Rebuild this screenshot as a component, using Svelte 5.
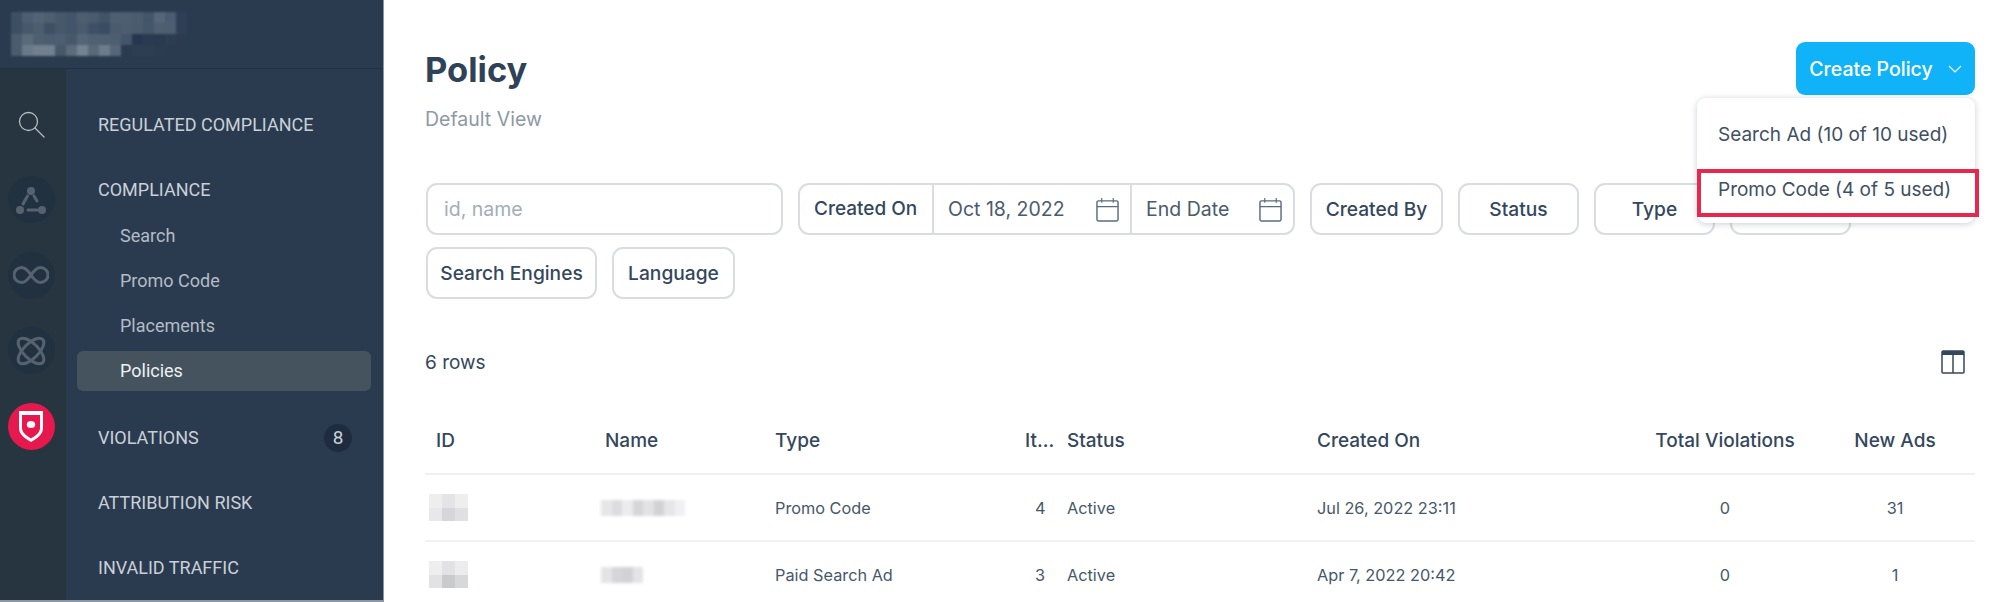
<script lang="ts">
  const railIcons = ['search', 'network', 'infinity', 'atom', 'shield'];

  const logoCells = [
    ['#3d4f62','#4c5e70','#526374','#4e5f70','#46586a','#43556a','#4d5e70','#4a5b6d','#415367','#4e5f72','#4d5e70','#4b5c6e','#435568','#55667a','#4b5c6e','#2f3f55'],
    ['#3d4f62','#46586b','#4c5d70','#3f5065','#46586a','#43556a','#4a5b6d','#3f5066','#394c62','#4a5b6d','#4c5d70','#4a5b6d','#445669','#4e5f70','#4d5e70','#2f3f55'],
    ['#4b5c6e','#5a6b7b','#4e5f71','#4c5d6f','#4d5e70','#46586a','#54657a','#4f6072','#4f6072','#4d5e70','#43556a','#253650','#2a3b50','#283950','#2c3d52','#2a3b50'],
    ['#4b5c6e','#6a7a89','#727f8d','#70808e','#46586a','#5c6c7c','#74838f','#59697a','#6d7c8a','#55667a','#2a3b50','#2d3e53','#2d3e53','#2b3c51','#2a3b50','#2a3b50'],
  ];

  const filters = [
    { label: 'Created By', cls: 'created-by' },
    { label: 'Status', cls: 'status' },
    { label: 'Type', cls: 'type' },
    // the label of this one sits behind the open dropdown
    { label: '', cls: 'hidden-chip' },
  ];
  const rows = [
    { type: 'Promo Code', items: 4, status: 'Active', created: 'Jul 26, 2022 23:11', total: 0, newAds: 31,
      idCells: ['#eeeeee','#e4e4e6','#eeeeee','#e8e8ea','#d6d6da','#e0e0e2'],
      nameCells: ['#e6e6e8','#dcdcde','#ececee','#d6d6d8','#e2e2e4','#d2d2d4','#e6e6e8','#f0f0f2'] },
    { type: 'Paid Search Ad', items: 3, status: 'Active', created: 'Apr 7, 2022 20:42', total: 0, newAds: 1,
      idCells: ['#eeeeee','#e2e2e4','#ececee','#e2e2e4','#c8cacc','#d6d8da'],
      nameCells: ['#e4e4e6','#d6d6d8','#d2d2d4','#e4e4e6'] },
  ];
</script>

<div class="page">
  <aside class="sidebar">
    <div class="brand">
      <div class="mosaic">
        {#each logoCells as line}
          {#each line as c}<span style="background:{c}"></span>{/each}
        {/each}
      </div>
    </div>
    <div class="side-body">
      <nav class="rail">
        {#each railIcons as name}
          <div class="rail-btn" class:plain={name === 'search'} class:on={name === 'shield'}>
            {#if name === 'search'}
              <svg width="30" height="30" viewBox="0 0 30 30" fill="none" stroke="#b4bcc4" stroke-width="1.3"><circle cx="12.5" cy="12.5" r="9"/><path d="M19 19l9 9" stroke-linecap="round"/></svg>
            {:else if name === 'network'}
              <svg width="32" height="32" viewBox="0 0 32 32" fill="none" stroke="#56636f" stroke-width="3" stroke-linecap="round"><circle cx="16" cy="7" r="4" fill="#56636f" stroke="none"/><circle cx="5" cy="26" r="4" fill="#56636f" stroke="none"/><circle cx="27" cy="26" r="4" fill="#56636f" stroke="none"/><path d="M12.500 12l-4.500 8M19 12l3 5M13 26h9"/></svg>
            {:else if name === 'infinity'}
              <svg width="36" height="20" viewBox="0 0 36 20" fill="none" stroke="#56636f" stroke-width="3"><path d="M18 10c-3-4.500-6-7.500-9.500-7.500a7.500 7.500 0 0 0 0 15c3.500 0 6.500-3 9.500-7.500s6-7.500 9.500-7.500a7.500 7.500 0 0 1 0 15c-3.500 0-6.500-3-9.500-7.500z"/></svg>
            {:else if name === 'atom'}
              <svg width="30" height="30" viewBox="0 0 30 30" fill="none" stroke="#56636f" stroke-width="3"><ellipse cx="15" cy="15" rx="7.500" ry="16.500" transform="rotate(45 15 15)"/><ellipse cx="15" cy="15" rx="7.500" ry="16.500" transform="rotate(-45 15 15)"/></svg>
            {:else}
              <svg width="24" height="31" viewBox="0 0 24 31"><path d="M0 0h24v17c0 6-5 10-12 14C5 27 0 23 0 17z" fill="#fff"/><path d="M3 4h18v13c0 4.500-4 7.500-9 10.500C7 24.500 3 21.500 3 17z" fill="#e6184d"/><ellipse cx="12" cy="13.500" rx="4.200" ry="3.600" fill="#fff"/></svg>
            {/if}
          </div>
        {/each}
      </nav>
      <nav class="menu">
        <div class="sec first">REGULATED COMPLIANCE</div>
        <div class="sec">COMPLIANCE</div>
        <div class="sub">Search</div>
        <div class="sub">Promo Code</div>
        <div class="sub">Placements</div>
        <div class="sub active">Policies</div>
        <div class="sec viol">VIOLATIONS <span class="badge">8</span></div>
        <div class="sec">ATTRIBUTION RISK</div>
        <div class="sec">INVALID TRAFFIC</div>
      </nav>
    </div>
  </aside>

  <main class="main">
    <header class="head">
      <div>
        <h1>Policy</h1>
        <p class="view">Default View</p>
      </div>
      <div class="create-wrap">
        <button class="create">Create Policy
          <svg width="14" height="8" viewBox="0 0 14 8" fill="none" stroke="#fff" stroke-width="1.200"><path d="M1 1l6 6 6-6"/></svg>
        </button>
        <div class="dropdown">
          <div class="opt">Search Ad (10 of 10 used)</div>
          <div class="opt hit">Promo Code (4 of 5 used)</div>
        </div>
      </div>
    </header>

    <div class="filters">
      <div class="search">id, name</div>
      <div class="dates">
        <div class="d-label">Created On</div>
        <div class="d-cell start">Oct 18, 2022
          <svg class="cal" width="23" height="25" viewBox="0 0 24 26" fill="none" stroke="#5a6b7d" stroke-width="1.500"><rect x="1" y="4" width="22" height="21" rx="1.500"/><path d="M1 10h22M6 1v5M18 1v5" stroke-width="1.200"/></svg>
        </div>
        <div class="d-cell end">End Date
          <svg class="cal" width="23" height="25" viewBox="0 0 24 26" fill="none" stroke="#5a6b7d" stroke-width="1.500"><rect x="1" y="4" width="22" height="21" rx="1.500"/><path d="M1 10h22M6 1v5M18 1v5" stroke-width="1.200"/></svg>
        </div>
      </div>
      {#each filters as f}
        <button class="chip {f.cls}">{f.label}</button>
      {/each}
      <button class="chip engines">Search Engines</button>
      <button class="chip language">Language</button>
    </div>

    <div class="count">
      <span>6 rows</span>
      <svg width="24" height="24" viewBox="0 0 24 24" fill="none" stroke="#34475c" stroke-width="1.500"><rect x="1" y="1" width="22" height="22" rx="1"/><path d="M1 3h22" stroke-width="4"/><path d="M12 2v21"/></svg>
    </div>

    <div class="table">
      <div class="tr th">
        <div class="c id">ID</div>
        <div class="c name">Name</div>
        <div class="c col-type">Type</div>
        <div class="c items">It...</div>
        <div class="c col-status">Status</div>
        <div class="c created">Created On</div>
        <div class="c total">Total Violations</div>
        <div class="c new">New Ads</div>
      </div>
      {#each rows as r}
        <div class="tr">
          <div class="c id">
            <div class="id-mosaic">
              {#each r.idCells as c}<span style="background:{c}"></span>{/each}
            </div>
          </div>
          <div class="c name">
            <div class="name-blur" style="width:{r.nameCells.length * 10.5}px">
              {#each r.nameCells as c}<span style="background:{c}"></span>{/each}
            </div>
          </div>
          <div class="c col-type">{r.type}</div>
          <div class="c items num">{r.items}</div>
          <div class="c col-status">{r.status}</div>
          <div class="c created">{r.created}</div>
          <div class="c total">{r.total}</div>
          <div class="c new">{r.newAds}</div>
        </div>
      {/each}
    </div>
  </main>
</div>

<style>
  :global(body) {
    margin: 0;
    background: #fff;
  }

  .page {
    display: flex;
    width: 1999px;
    height: 602px;
    overflow: hidden;
    font-family: "Inter", "Liberation Sans", sans-serif;
    color: #34475c;
  }

  .sidebar {
    width: 384px;
    height: 602px;
    flex: none;
    box-sizing: border-box;
    background: #2a3b50;
    display: flex;
    flex-direction: column;
    border-right: 1px solid #8d97a3;
    border-bottom: 2px solid #8d97a3;
    font-family: Roboto, "Liberation Sans", sans-serif;
  }

  .brand {
    height: 69px;
    flex: none;
    border-bottom: 1px solid #223041;
    padding: 12px 0 0 11px;
    box-sizing: border-box;
  }

  .mosaic {
    display: grid;
    grid-template-columns: repeat(16, 11px);
    grid-auto-rows: 11px;
    filter: blur(1px);
  }

  .side-body {
    flex: 1;
    display: flex;
    min-height: 0;
  }

  .rail {
    width: 66px;
    flex: none;
    background: #26353f;
    display: flex;
    flex-direction: column;
    align-items: center;
    padding-top: 31px;
    box-sizing: border-box;
    padding-right: 4px;
  }

  .rail-btn {
    width: 47px;
    height: 47px;
    border-radius: 50%;
    background: #223140;
    display: flex;
    align-items: center;
    justify-content: center;
    margin-bottom: 28.500px;
  }

  .rail-btn.plain {
    background: none;
    margin-bottom: 29px;
  }

  .rail-btn.on {
    background: #e6184d;
  }

  .menu {
    flex: 1;
    padding: 42px 12px 0 11px;
    color: #c9d0d7;
  }

  .sec {
    height: 28px;
    line-height: 28px;
    font-size: 18px;
    padding-left: 21px;
    margin-top: 37px;
  }

  .sec.first {
    margin-top: 0;
  }

  .sub {
    height: 40px;
    line-height: 40px;
    font-size: 18px;
    padding-left: 43px;
    margin-top: 5px;
    border-radius: 6px;
    color: #b3bcc5;
  }

  .sec + .sub {
    margin-top: 12px;
  }

  .sub.active {
    background: #45535f;
    color: #eef0f2;
  }

  .viol {
    display: flex;
    justify-content: space-between;
    align-items: center;
    padding-right: 19px;
    margin-top: 33px;
  }

  .badge {
    width: 28px;
    height: 28px;
    border-radius: 50%;
    background: #1f2c3f;
    text-align: center;
    font-size: 19px;
    line-height: 28px;
  }

  .main {
    flex: 1;
    min-width: 0;
    padding: 42px 24px 0 41px;
  }

  .head {
    display: flex;
    justify-content: space-between;
    height: 141px;
  }

  h1 {
    margin: 6px 0 0;
    font-size: 34.500px;
    line-height: 44px;
    font-weight: 700;
    color: #2f4257;
  }

  .view {
    margin: 15px 0 0;
    font-size: 19.500px;
    line-height: 24px;
    color: #8d99a6;
  }

  .create-wrap {
    position: relative;
    z-index: 2;
  }

  .create {
    width: 179px;
    height: 53px;
    background: #10b3f8;
    border: none;
    border-radius: 9px;
    color: #fff;
    font: 500 19.500px "Inter", sans-serif;
    display: flex;
    align-items: center;
    justify-content: center;
    gap: 15px;
  }

  .dropdown {
    position: absolute;
    top: 56px;
    right: 0;
    width: 278px;
    height: 125px;
    background: #fff;
    border-radius: 9px;
    box-shadow: 0 1px 6px rgba(40, 55, 75, 0.25);
    font-size: 19px;
  }

  .opt {
    height: 47px;
    line-height: 47px;
    padding: 13px 0 0 21px;
    white-space: nowrap;
    color: #3f5063;
  }

  .hit {
    position: absolute;
    left: 0;
    top: 71px;
    width: 282px;
    height: 48px;
    box-sizing: border-box;
    border: 4px solid #e8274f;
    line-height: 34px;
    padding: 0 0 0 17px;
  }

  .filters {
    display: flex;
    flex-wrap: wrap;
    gap: 12px 15px;
    width: 1500px;
    font-size: 19.500px;
    color: #34475c;
  }

  .search,
  .dates,
  .chip {
    height: 52px;
    box-sizing: border-box;
    border: 2px solid #d9dde2;
    border-radius: 11px;
    background: #fff;
  }

  .search {
    width: 357px;
    margin-left: 1px;
    padding-left: 16px;
    line-height: 48px;
    color: #a3adb8;
  }

  .dates {
    display: flex;
    width: 497px;
  }

  .d-label {
    width: 132px;
    font-size: 19px;
    font-weight: 500;
    line-height: 48px;
    padding-left: 14px;
    box-sizing: border-box;
    white-space: nowrap;
  }

  .d-cell {
    display: flex;
    align-items: center;
    justify-content: space-between;
    border-left: 2px solid #d9dde2;
    padding: 0 11px 0 14px;
    box-sizing: border-box;
    color: #4a5b6d;
  }

  .start { width: 198px; }
  .end { width: 163px; }

  .chip {
    font: 500 19.200px "Inter", sans-serif;
    color: #34475c;
    padding: 0;
    white-space: nowrap;
  }

  .created-by { width: 133px; }
  .status { width: 121px; }
  .type { width: 121px; }
  .hidden-chip { width: 121px; }
  .engines { width: 171px; margin-left: 1px; }
  .language { width: 123px; }

  .count {
    display: flex;
    justify-content: space-between;
    align-items: center;
    height: 26px;
    margin-top: 50px;
    padding-right: 10px;
    font-size: 19px;
  }

  .table {
    margin-top: 33px;
  }

  .tr {
    display: flex;
    align-items: center;
    height: 67px;
    box-sizing: border-box;
    border-bottom: 2px solid #f0f1f3;
    font-size: 16.300px;
    color: #46576a;
  }

  .th {
    font-size: 19px;
    font-weight: 500;
    color: #34475c;
  }

  .c { flex: none; white-space: nowrap; box-sizing: border-box; }
  .c.id { width: 180px; padding-left: 11px; }
  .c.name { width: 170px; }
  .c.col-type { width: 250px; }
  .c.items { width: 42px; }
  .c.num { padding-left: 10px; }
  .c.col-status { width: 250px; }
  .c.created { width: 280px; }
  .c.total { width: 256px; text-align: center; }
  .c.new { width: 84px; text-align: center; }

  .id-mosaic {
    display: grid;
    grid-template-columns: repeat(3, 13px);
    grid-auto-rows: 13.500px;
    filter: blur(0.5px);
    margin-left: -7px;
  }

  .name-blur {
    display: flex;
    height: 16px;
    filter: blur(1.500px);
    margin-left: -4px;
  }

  .name-blur span {
    flex: 1;
  }
</style>
